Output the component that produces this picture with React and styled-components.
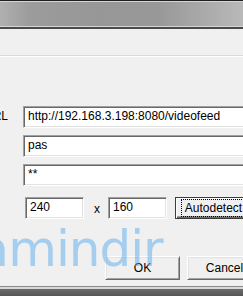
import React from "react";
import styled, { createGlobalStyle } from "styled-components";

const GlobalStyle = createGlobalStyle`
  body {
    margin: 0;
    background: #f0f0f0;
    font-family: "Liberation Sans", Arial, sans-serif;
    font-size: 12px;
    color: #000;
  }
`;

const Frame = styled.div`
  width: 243px;
  height: 296px;
  overflow: hidden;
  position: relative;
  background: #f0f0f0;
  display: flex;
  flex-direction: column;
`;

const TitleBar = styled.div`
  height: 26px;
  flex-shrink: 0;
  border-top: 1px solid #1f1f1f;
  border-bottom: 2px solid #4a4a4a;
  box-shadow: inset 0 1px #d4d4d4, inset 0 -1px #d6d6d6;
  background: linear-gradient(
    90deg,
    #b0b0b0 0%,
    #9c9c9c 12%,
    #979797 40%,
    #989898 65%,
    #a6a6a6 80%,
    #b9b9b9 100%
  );
`;

const Banner = styled.div`
  height: 26px;
  flex-shrink: 0;
  border-bottom: 1px solid #dadada;
  box-shadow: 0 1px #ffffff;
`;

const Form = styled.div`
  display: flex;
  flex-direction: column;
  gap: 7px;
  padding-top: 50px;
  margin-left: -16px;
`;

const Row = styled.div`
  display: flex;
  align-items: center;
  gap: ${(p) => p.$gap || 0}px;
  padding-left: ${(p) => p.$indent || 0}px;
  margin-top: ${(p) => p.$top || 0}px;
`;

const Label = styled.span`
  width: 39px;
  flex-shrink: 0;
  line-height: 14px;
  margin-top: -2px;
`;

const Field = styled.input`
  box-sizing: border-box;
  width: ${(p) => p.$w}px;
  height: ${(p) => p.$h || 22}px;
  flex-shrink: 0;
  margin: 0;
  padding: 0 4px 3px;
  font-family: "Liberation Sans", Arial, sans-serif;
  font-size: 12px;
  color: #000;
  background: #fff;
  border-style: solid;
  border-width: 1px;
  border-color: #a0a0a0 #ffffff #ffffff #a0a0a0;
  box-shadow: inset 1px 1px #696969, inset -1px -1px #e3e3e3;
  outline: none;
`;

const Times = styled.span`
  width: 22px;
  text-align: center;
  flex-shrink: 0;
  line-height: 14px;
  margin-top: 2px;
  padding-left: 2px;
`;

const Button = styled.div`
  box-sizing: border-box;
  width: ${(p) => p.$w || 75}px;
  height: ${(p) => p.$h || 24}px;
  flex-shrink: 0;
  display: flex;
  align-items: center;
  justify-content: center;
  background: #f0f0f0;
  border-style: solid;
  border-width: 1px;
  border-color: ${(p) =>
    p.$default ? "#3c3c3c" : "#ffffff #696969 #696969 #ffffff"};
  box-shadow: ${(p) =>
    p.$default
      ? "inset 1px 1px #ffffff, inset -1px -1px #696969, inset -2px -2px #a0a0a0"
      : "inset 1px 1px #e3e3e3, inset -1px -1px #a0a0a0"};
  line-height: 14px;
`;

const Focus = styled.span`
  padding: 1px 3px;
  outline: 1px dotted #000;
  outline-offset: 0;
`;

const Watermark = styled.div`
  position: absolute;
  left: -41px;
  top: 224px;
  font-family: "DejaVu Sans", sans-serif;
  font-size: 50px;
  line-height: 50px;
  letter-spacing: -1px;
  color: rgba(90, 170, 235, 0.5);
  pointer-events: none;
  white-space: nowrap;
`;

const BottomEdge = styled.div`
  position: absolute;
  left: 0;
  right: 0;
  bottom: 0;
  height: 9px;
  border-top: 1px solid #8a8a8a;
  box-shadow: inset 0 1px #d8d8d8;
  background: linear-gradient(180deg, #d8d8d8 0 2px, #6c6c6c 2px, #555 100%);
`;

export default function App() {
  return (
    <Frame>
      <GlobalStyle />
      <TitleBar />
      <Banner />
      <Form>
        <Row>
          <Label>URL</Label>
          <Field $w={260} defaultValue="http://192.168.3.198:8080/videofeed" />
        </Row>
        <Row>
          <Label />
          <Field $w={260} defaultValue="pas" />
        </Row>
        <Row>
          <Label />
          <Field $w={260} type="text" defaultValue="**" />
        </Row>
        <Row $indent={2} $top={4}>
          <Label />
          <Field $w={59} defaultValue="240" />
          <Times>x</Times>
          <Field $w={59} defaultValue="160" />
          <Button $default $w={77} $h={22} style={{ marginLeft: 8 }}>
            <Focus>Autodetect</Focus>
          </Button>
        </Row>
        <Row $top={30} $gap={7} $indent={121}>
          <Button>OK</Button>
          <Button>Cancel</Button>
        </Row>
      </Form>
      <Watermark>ramindir</Watermark>
      <BottomEdge />
    </Frame>
  );
}
